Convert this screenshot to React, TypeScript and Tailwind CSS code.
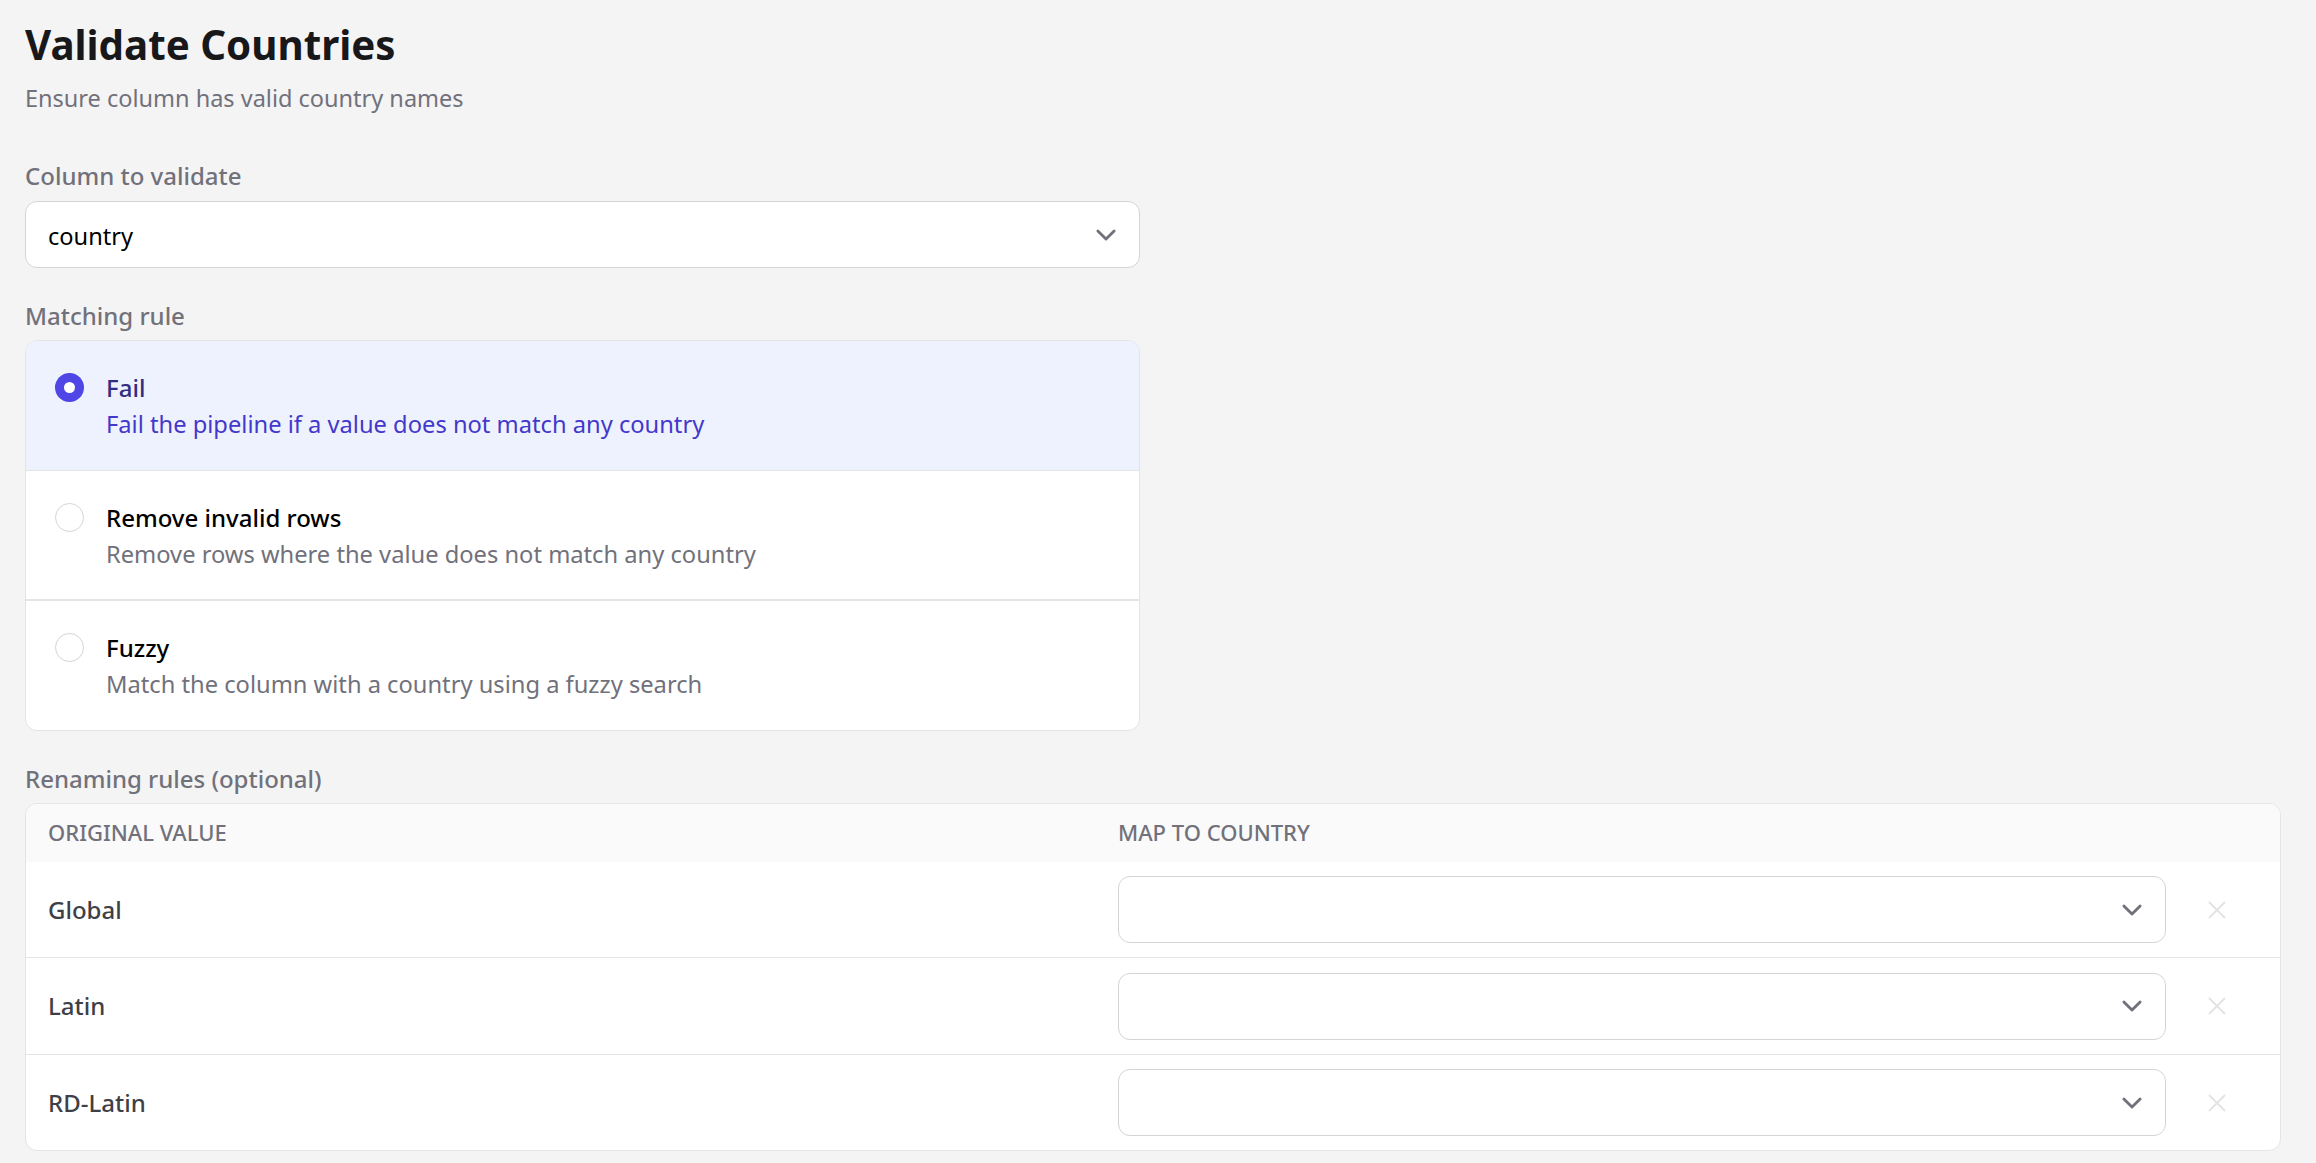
const rules = [
  { title: "Fail", description: "Fail the pipeline if a value does not match any country" },
  { title: "Remove invalid rows", description: "Remove rows where the value does not match any country" },
  { title: "Fuzzy", description: "Match the column with a country using a fuzzy search" },
]

const renames = [
  { name: "Global", row: "h-[95px] flex items-center" },
  { name: "Latin", row: "h-[97px] flex items-center border-t border-zinc-200" },
  { name: "RD-Latin", row: "h-[96px] flex items-center border-t border-zinc-200" },
]

function Chevron() {
  return (
    <svg viewBox="0 0 24 24" fill="none" stroke="#71717a" strokeWidth={2.6} className="w-[26px] h-[26px]">
      <path strokeLinecap="round" strokeLinejoin="round" d="m19.5 8.25-7.5 7.5-7.5-7.5" />
    </svg>
  )
}

function Select({ value }: { value?: string }) {
  return (
    <div className="h-[67px] flex items-center justify-between pl-[22px] pr-[20px] bg-white border border-zinc-300 rounded-[12px] text-[23.6px] text-black">
      <span className="mt-[4px]">{value}</span>
      <Chevron />
    </div>
  )
}

function Label({ children, gap }: { children: string; gap: string }) {
  return <div className={"text-[24px] leading-[30px] font-medium text-zinc-500 " + gap}>{children}</div>
}

export default function App() {
  return (
    <div className="min-h-screen bg-zinc-100 pl-[25px] pr-[35px] pt-[21px] font-['Noto_Sans',sans-serif]">
      <h1 className="text-[40.3px] leading-[48px] font-bold text-zinc-900">Validate Countries</h1>
      <p className="mt-[14px] text-[23.5px] leading-[30px] text-zinc-500">Ensure column has valid country names</p>

      <div className="mt-[48px] w-[1115px]">
        <Label gap="mb-[10px]">Column to validate</Label>
        <Select value="country" />
      </div>

      <div className="mt-[33px] w-[1115px]">
        <Label gap="mb-[9px]">Matching rule</Label>
        <div className="bg-white border border-zinc-200 rounded-[12px] overflow-hidden">
          {rules.map((rule, i) => (
            <div
              key={rule.title}
              className={
                i === 0
                  ? "h-[130px] flex gap-[22px] pl-[29px] pt-[32px] bg-[#eef2ff] border-b border-zinc-200"
                  : i === 1
                    ? "h-[130px] flex gap-[22px] pl-[29px] pt-[32px] border-b-2 border-zinc-200"
                    : "h-[129px] flex gap-[22px] pl-[29px] pt-[32px]"
              }
            >
              {i === 0 ? (
                <div className="w-[29px] h-[29px] rounded-full bg-[#4f46e5] flex items-center justify-center shrink-0">
                  <div className="w-[11px] h-[11px] rounded-full bg-white" />
                </div>
              ) : (
                <div className="w-[29px] h-[29px] rounded-full bg-white border border-zinc-300 shrink-0" />
              )}
              <div>
                <div className={i === 0 ? "text-[24px] leading-[30px] font-medium text-[#312e81]" : "text-[24px] leading-[30px] font-medium text-black"}>
                  {rule.title}
                </div>
                <div className={i === 0 ? "mt-[6px] text-[23.7px] leading-[30px] text-[#4338ca]" : "mt-[6px] text-[23.7px] leading-[30px] text-zinc-500"}>
                  {rule.description}
                </div>
              </div>
            </div>
          ))}
        </div>
      </div>

      <div className="mt-[33px]">
        <Label gap="mb-[9px]">Renaming rules (optional)</Label>
        <div className="bg-white border border-zinc-200 rounded-[12px] overflow-hidden">
          <div className="h-[58px] flex items-center pb-[2px] bg-zinc-50 text-[22px] font-medium text-zinc-500 uppercase">
            <div className="w-[1092px] pl-[22px]">Original value</div>
            <div>Map to country</div>
          </div>
          {renames.map(({ name, row }) => (
            <div key={name} className={row}>
              <div className="w-[1092px] pl-[22px] text-[24px] font-medium text-zinc-700">{name}</div>
              <div className="flex-1">
                <Select />
              </div>
              <div className="w-[114px] pr-[13px] flex justify-center">
                <svg viewBox="0 0 24 24" fill="none" stroke="#e4e4e7" strokeWidth={1.6} className="w-[30px] h-[30px]">
                  <path strokeLinecap="round" strokeLinejoin="round" d="M6 18 18 6M6 6l12 12" />
                </svg>
              </div>
            </div>
          ))}
        </div>
      </div>
    </div>
  )
}
